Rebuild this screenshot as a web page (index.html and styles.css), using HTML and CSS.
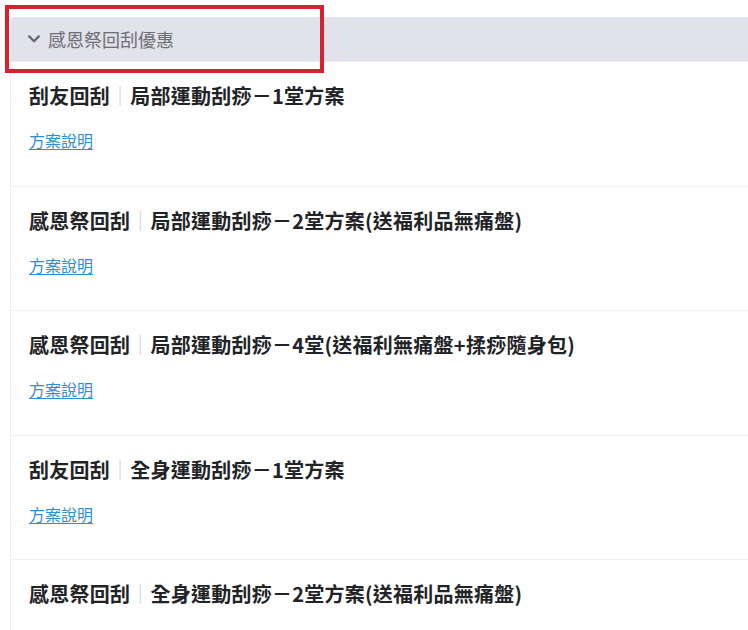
FILE: index.html
```html
<!DOCTYPE html>
<html lang="zh-Hant">
<head>
<meta charset="utf-8">
<title>感恩祭回刮優惠</title>
<link rel="stylesheet" href="styles.css">
</head>
<body>
<div class="panel">
  <div class="panel-head">
    <svg class="chev" width="12" height="8" viewBox="0 0 12 8"><path d="M1.2 1.4 L6 6.2 L10.8 1.4" fill="none" stroke="#66666b" stroke-width="2.2" stroke-linecap="round" stroke-linejoin="round"/></svg>
    <span class="head-text">感恩祭回刮優惠</span>
  </div>
  <div class="item">
    <div class="title">刮友回刮<span class="sep">｜</span>局部運動刮痧－1堂方案</div>
    <a class="link" href="#">方案說明</a>
  </div>
  <div class="item">
    <div class="title">感恩祭回刮<span class="sep">｜</span>局部運動刮痧－2堂方案(送福利品無痛盤)</div>
    <a class="link" href="#">方案說明</a>
  </div>
  <div class="item">
    <div class="title">感恩祭回刮<span class="sep">｜</span>局部運動刮痧－4堂(送福利無痛盤+揉痧隨身包)</div>
    <a class="link" href="#">方案說明</a>
  </div>
  <div class="item">
    <div class="title">刮友回刮<span class="sep">｜</span>全身運動刮痧－1堂方案</div>
    <a class="link" href="#">方案說明</a>
  </div>
  <div class="item">
    <div class="title">感恩祭回刮<span class="sep">｜</span>全身運動刮痧－2堂方案(送福利品無痛盤)</div>
    <a class="link" href="#">方案說明</a>
  </div>
</div>
<div class="highlight"></div>
</body>
</html>
```
FILE: styles.css
```css
html, body {
  margin: 0;
  padding: 0;
  background: #ffffff;
  font-family: "Noto Sans CJK TC", "Noto Sans", sans-serif;
  overflow: hidden;
}

.panel {
  margin: 17px 0 0 10px;
  border-left: 1px solid #ededf0;
  min-height: 700px;
}

.panel-head {
  height: 44px;
  background: #e1e2ea;
  border-top-left-radius: 4px;
  border-bottom: 1px solid #ecedf2;
  display: flex;
  align-items: center;
  padding-left: 17px;
  gap: 8px;
}

.chev {
  display: block;
}

.head-text {
  font-size: 18px;
  line-height: 24px;
  color: #6e6e73;
}

.item {
  padding: 20px 18px 34.5px;
  border-bottom: 1px solid #f1f1f3;
  display: flex;
  flex-direction: column;
  align-items: flex-start;
  gap: 19px;
}

.title {
  font-size: 20px;
  line-height: 28px;
  font-weight: 700;
  letter-spacing: 0.25px;
  color: #222326;
  white-space: nowrap;
}

.sep {
  color: #c9c9cc;
  font-weight: 300;
}

.link {
  font-size: 16px;
  line-height: 22px;
  color: #2b8fd3;
  text-decoration: underline;
  text-underline-offset: 2px;
}

.highlight {
  position: absolute;
  left: 5px;
  top: 5px;
  width: 311px;
  height: 60px;
  border: 4px solid #d8222e;
  pointer-events: none;
}
```
